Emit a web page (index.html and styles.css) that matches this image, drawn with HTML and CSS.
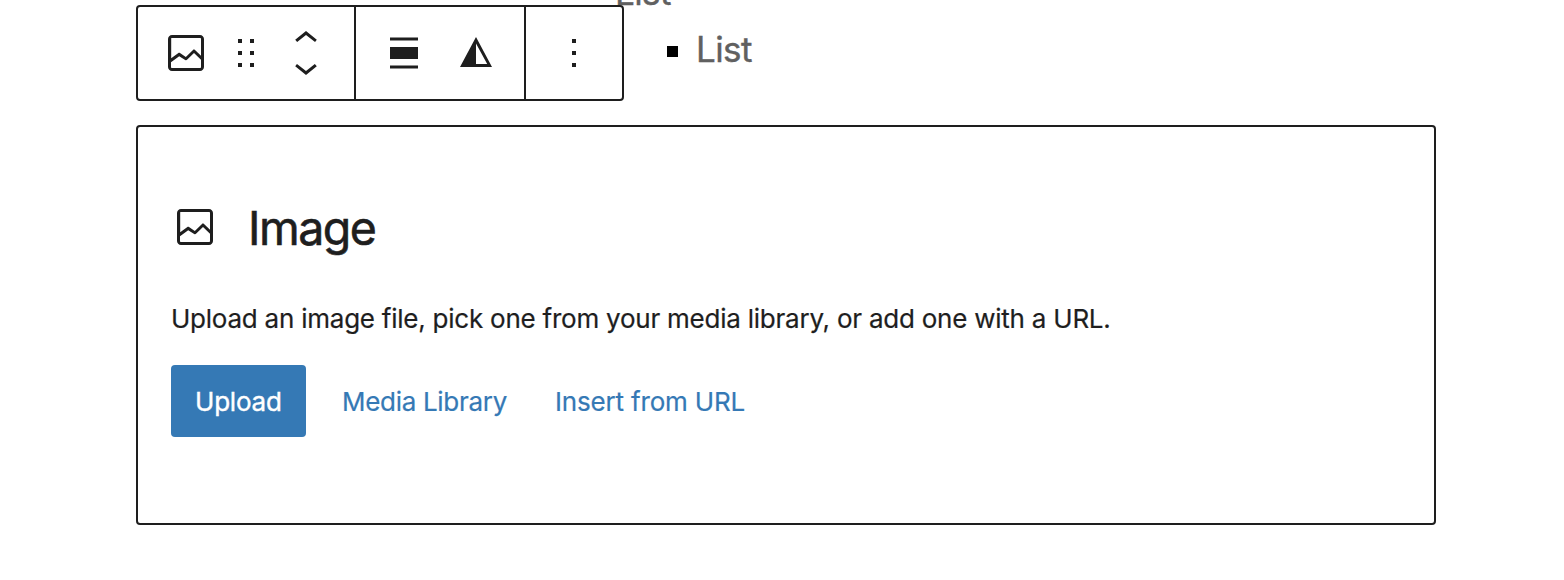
FILE: index.html
```html
<!DOCTYPE html>
<html lang="en">
<head>
<meta charset="utf-8">
<title>Image block</title>
<link rel="stylesheet" href="styles.css">
</head>
<body>
<main class="editor">
  <header class="top-row">
    <div class="toolbar">
      <div class="group group-block">
        <svg class="icon" viewBox="0 0 24 24"><path d="M19 3H5c-1.1 0-2 .9-2 2v14c0 1.1.9 2 2 2h14c1.1 0 2-.9 2-2V5c0-1.1-.9-2-2-2zM5 4.500h14c.3 0 .5.2.5.5v8.400l-3-2.900c-.3-.3-.8-.3-1 0L11.900 14 9 12c-.3-.2-.6-.2-.8 0l-3.600 2.600V5c-.1-.3.1-.5.4-.5zm14 15H5c-.3 0-.5-.2-.5-.5v-2.400l4.100-3 3 1.900c.3.2.7.2.9-.1L16 12l3.500 3.400V19c0 .3-.2.5-.5.5z"/></svg>
        <svg class="icon-drag" viewBox="0 0 16 28"><path d="M0 0h4v4H0zM12 0h4v4h-4zM0 12h4v4H0zM12 12h4v4h-4zM0 24h4v4H0zM12 24h4v4h-4z"/></svg>
        <div class="movers">
          <svg class="mover" viewBox="6.500 8 11 5.600"><path d="M6.500 12.400L12 8l5.500 4.400-.9 1.200L12 10l-4.500 3.600-1-1.200z"/></svg>
          <svg class="mover" viewBox="6.500 10.400 11 5.600"><path d="M17.500 11.600L12 16l-5.500-4.400.9-1.200L12 14l4.500-3.600 1 1.200z"/></svg>
        </div>
      </div>
      <div class="group group-style">
        <svg class="icon" viewBox="0 0 48 48"><path d="M10 8.500h28v3H10zM10 18h28v12H10zM10 36.500h28v3H10z"/></svg>
        <svg class="icon" viewBox="0 0 48 48"><path fill-rule="evenodd" d="M24 8l16 30H8zM24 14.500V35h11.200z"/></svg>
      </div>
      <div class="group group-more">
        <svg class="icon-more" viewBox="0 0 4 28"><path d="M0 0h4v4H0zM0 12h4v4H0zM0 24h4v4H0z"/></svg>
      </div>
    </div>
    <div class="list">
      <div class="list-parent">List</div>
      <div class="list-child"><span class="bullet"></span><span>List</span></div>
    </div>
  </header>
  <section class="placeholder">
    <div class="heading">
      <svg class="icon" viewBox="0 0 24 24"><path d="M19 3H5c-1.1 0-2 .9-2 2v14c0 1.1.9 2 2 2h14c1.1 0 2-.9 2-2V5c0-1.1-.9-2-2-2zM5 4.500h14c.3 0 .5.2.5.5v8.400l-3-2.900c-.3-.3-.8-.3-1 0L11.900 14 9 12c-.3-.2-.6-.2-.8 0l-3.600 2.600V5c-.1-.3.1-.5.4-.5zm14 15H5c-.3 0-.5-.2-.5-.5v-2.400l4.100-3 3 1.900c.3.2.7.2.9-.1L16 12l3.500 3.400V19c0 .3-.2.5-.5.5z"/></svg>
      <span class="title">Image</span>
    </div>
    <p class="instructions">Upload an image file, pick one from your media library, or add one with a URL.</p>
    <div class="actions">
      <button class="button primary">Upload</button>
      <button class="button media">Media Library</button>
      <button class="button url">Insert from URL</button>
    </div>
  </section>
</main>
</body>
</html>
```
FILE: styles.css
```css
* { box-sizing: border-box; }
body {
  margin: 0;
  background: #fff;
  color: #1e1e1e;
  font-family: Inter, "Liberation Sans", sans-serif;
  height: 580px;
  overflow: hidden;
}
svg { display: block; fill: #1e1e1e; flex: none; }
.editor { width: 1300px; margin-left: 136px; }
.top-row { display: flex; height: 125px; }
.toolbar {
  display: flex;
  flex: none;
  position: relative;
  z-index: 1;
  width: 488px;
  height: 96px;
  margin-top: 5px;
  border: 2px solid #1e1e1e;
  border-radius: 4px;
  background: #fff;
}
.group { display: flex; align-items: center; }
.group + .group { border-left: 2px solid #1e1e1e; }
.group-block { width: 216px; padding-left: 24px; }
.group-style { width: 170px; padding-left: 24px; gap: 24px; }
.group-more { flex: 1; justify-content: center; }
.icon { width: 48px; height: 48px; }
.icon-drag { width: 16px; height: 28px; margin-left: 28px; }
.icon-more { width: 4px; height: 28px; }
.movers { display: flex; flex-direction: column; gap: 22px; margin-left: 41px; }
.mover { width: 22px; height: 11px; }
.list {
  color: #606060;
  font-size: 35px;
  line-height: 58px;
  letter-spacing: -0.600px;
  margin: -37px 0 0 -9px;
  -webkit-text-stroke: 0.400px;
}
.list-child { display: flex; align-items: center; margin: -1px 0 0 52px; }
.bullet { width: 11px; height: 11px; margin: 5px 18px 0 0; background: #000; }
.placeholder {
  height: 400px;
  padding: 76px 33px 0;
  border: 2px solid #1e1e1e;
  border-radius: 4px;
}
.heading { display: flex; align-items: center; height: 48px; }
.title {
  margin-left: 29px;
  padding-top: 2px;
  font-size: 46.500px;
  line-height: 56px;
  letter-spacing: -1.500px;
  -webkit-text-stroke: 0.600px;
}
.instructions {
  margin: 50px 0 0;
  font-size: 26px;
  line-height: 36px;
  letter-spacing: -0.235px;
  white-space: nowrap;
  -webkit-text-stroke: 0.200px;
}
.actions { display: flex; margin-top: 28px; }
.button {
  height: 72px;
  padding: 2px 0 0;
  border: 0;
  border-radius: 4px;
  background: none;
  color: #3579b5;
  font: 400 26px/70px Inter, "Liberation Sans", sans-serif;
  letter-spacing: -0.300px;
  text-align: left;
  white-space: nowrap;
  -webkit-text-stroke: 0.200px;
}
.primary { width: 135px; padding-left: 24px; background: #3579b5; color: #fff; letter-spacing: -0.200px; -webkit-text-stroke: 0.400px; }
.media { width: 165px; margin-left: 36px; }
.url { width: 190px; margin-left: 48px; letter-spacing: -0.170px; }
```
